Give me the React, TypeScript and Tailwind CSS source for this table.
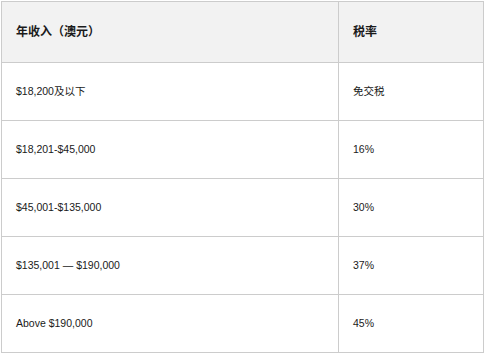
const rows = [
  ['$18,200及以下', '免交税'],
  ['$18,201-$45,000', '16%'],
  ['$45,001-$135,000', '30%'],
  ['$135,001 — $190,000', '37%'],
  ['Above $190,000', '45%'],
]

export default function App() {
  return (
    <div
      className="w-[485px] h-[357px] bg-white pt-[1px] pl-[1px]"
      style={{ fontFamily: '"Liberation Sans", "Noto Sans CJK SC", sans-serif' }}
    >
      <table className="w-[483px] border-collapse text-[#1a1a1a]">
        <thead>
          <tr className="h-[61px] bg-[#f2f2f2]">
            <th className="w-[337px] border border-[#cccccc] px-[14px] text-left text-[12px] font-bold">
              年收入（澳元）
            </th>
            <th className="border border-[#cccccc] px-[14px] text-left text-[12px] font-bold">
              税率
            </th>
          </tr>
        </thead>
        <tbody>
          {rows.map(([income, rate]) => (
            <tr key={income} className="h-[58px]">
              <td className="border border-[#cccccc] px-[14px] text-[10.5px]">{income}</td>
              <td className="border border-[#cccccc] px-[14px] text-[10.5px]">{rate}</td>
            </tr>
          ))}
        </tbody>
      </table>
    </div>
  )
}
